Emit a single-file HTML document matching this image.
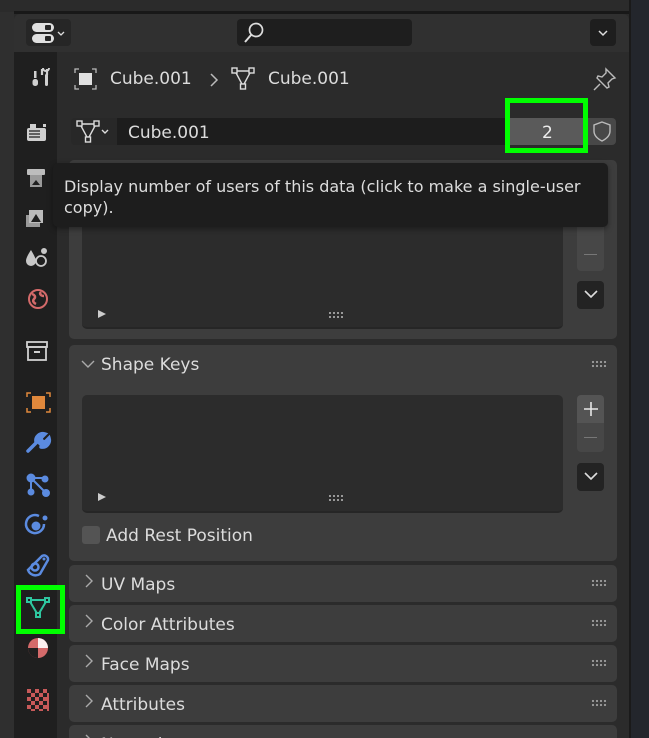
<!DOCTYPE html>
<html style="width:649px;height:738px;overflow:hidden"><head><meta charset="utf-8"><style>
*{margin:0;padding:0;box-sizing:border-box}
body{width:649px;height:738px;overflow:hidden;background:#2a2a2a;font-family:"DejaVu Sans","Liberation Sans",sans-serif;color:#dcdcdc;position:relative}
.a{position:absolute}
.t{position:absolute;font-size:16px;white-space:nowrap;line-height:20px}
.panel{position:absolute;left:69px;width:548px;background:#3d3d3d;border-radius:5px}
.grip{position:absolute;right:10px;width:16px;height:8px;background-image:radial-gradient(circle,#9a9a9a 1px,transparent 1.3px);background-size:4px 4px}
.btn{position:absolute;background:#545454;border-radius:4px}
.dk{position:absolute;background:#1e1e1e;border-radius:4px}
</style></head><body>
<div class="a" style="left:0;top:0;width:14px;height:738px;background:#2f2f2f"></div>
<div class="a" style="left:0;top:0;width:649px;height:12px;background:#2b2b2b"></div>
<div class="a" style="left:14px;top:11px;width:617px;height:3px;background:#181818"></div>
<div class="a" style="left:631px;top:0;width:18px;height:738px;background:#23262c"></div>
<div class="a" style="left:629px;top:0;width:2px;height:738px;background:#1a1a1a"></div>
<div class="a" style="left:14px;top:14px;width:615px;height:38px;background:#303030;border-radius:6px 6px 0 0"></div>
<div class="dk" style="left:26px;top:19px;width:45px;height:27px;background:#262626"></div>
<svg class="a" style="left:30px;top:21px" width="40" height="24"><rect x="2" y="2" width="22" height="9" rx="4.5" fill="#e0e0e0"/><rect x="15" y="4" width="6" height="5" rx="1" fill="#262626"/><rect x="2" y="13" width="22" height="9" rx="4.5" fill="#e0e0e0"/><rect x="15" y="15" width="6" height="5" rx="1" fill="#262626"/><path d="M28 11l3 3 3-3" stroke="#ddd" stroke-width="1.3" fill="none"/></svg>
<div class="dk" style="left:237px;top:19px;width:175px;height:27px;background:#1e1e1e"></div>
<svg class="a" style="left:242px;top:20px" width="26" height="26"><circle cx="14" cy="10" r="6.5" stroke="#ddd" stroke-width="1.7" fill="none"/><path d="M9.5 14.5L3 22" stroke="#ddd" stroke-width="2"/></svg>
<div class="dk" style="left:590px;top:19px;width:26px;height:27px;background:#1e1e1e"></div>
<svg class="a" style="left:597px;top:28px" width="12" height="10"><path d="M2 3l4 4 4-4" stroke="#ddd" stroke-width="1.5" fill="none"/></svg>
<div class="a" style="left:14px;top:52px;width:43px;height:686px;background:#1f1f1f"></div>
<div class="a" style="left:57px;top:52px;width:572px;height:686px;background:#2b2b2b"></div>
<svg class="a" style="left:14px;top:52px" width="43" height="686">
<g fill="#d0d0d0">
<path d="M28 17v6M33 17v6" stroke="#d0d0d0" stroke-width="2.2"/><rect x="31" y="22" width="3" height="12" rx="1.5"/><path d="M29 16a3 3 0 0 0 6 0" stroke="#d0d0d0" stroke-width="2" fill="none"/>
<rect x="20" y="19" width="2.5" height="7"/><rect x="18.5" y="27" width="5.5" height="7" rx="2.5"/>
<rect x="13" y="76" width="19" height="13" rx="2" fill="#cfcfcf"/><rect x="16" y="72" width="6" height="4"/><rect x="29" y="72" width="3" height="3"/><path d="M15 79h11M15 82h11M15 85h11" stroke="#1f1f1f" stroke-width="1.3"/>
<rect x="13" y="117" width="18" height="6" rx="1" fill="#bdbdbd"/><rect x="16" y="123" width="12" height="12" fill="#9a9a9a"/><path d="M18 133l4-5 4 5z" fill="#1f1f1f"/>
<rect x="12" y="163" width="14" height="12" fill="#999"/><rect x="15" y="158" width="14" height="13" fill="#bbb"/><path d="M17 170l5-8 5 8z" fill="#1f1f1f"/>
<path d="M17 198c-4 6-5 9-5 11a5 5 0 0 0 10 0c0-2-2-6-5-11z" fill="#c8c8c8"/><circle cx="30" cy="199" r="3" fill="#c8c8c8"/><circle cx="27" cy="209" r="5" stroke="#c8c8c8" stroke-width="1.8" fill="#1f1f1f"/>
<circle cx="24" cy="247" r="9" stroke="#d46a6a" stroke-width="2" fill="none"/><path d="M18 242c3 1 4 3 2 5s0 4 2 5M27 240c-2 2 0 4 3 4" stroke="#d46a6a" stroke-width="2.5" fill="none"/>
<rect x="13" y="290" width="20" height="5" fill="none" stroke="#d0d0d0" stroke-width="1.8"/><rect x="14" y="295" width="18" height="13" fill="none" stroke="#d0d0d0" stroke-width="1.8"/><rect x="20" y="299" width="6" height="2"/>
</g>
<rect x="18" y="344" width="13" height="13" fill="#e0883c"/><path d="M13 345v-4h4M32 341h4v4M13 356v4h4M32 360h4v-4" stroke="#e0883c" stroke-width="1.5" fill="none"/>
<path d="M14 399l9-9M22 390a7 7 0 0 1 9-8l-4 4 1 3 3 1 4-4a7 7 0 0 1-8 9" stroke="#5b8be0" stroke-width="3.5" fill="#5b8be0" stroke-linecap="round"/>
<g fill="#5b8be0" stroke="#5b8be0" stroke-width="2"><circle cx="17" cy="426" r="3.5"/><circle cx="31" cy="427" r="2.5"/><circle cx="17" cy="440" r="2.5"/><circle cx="32" cy="441" r="3"/><path d="M17 426v14M17 426h14M17 426l15 15"/></g>
<circle cx="22" cy="474" r="4.5" fill="#5b8be0"/><circle cx="31" cy="466" r="2.5" fill="#5b8be0"/><path d="M30 472a9 9 0 1 1-5-8" stroke="#5b8be0" stroke-width="2.5" fill="none"/>
<g stroke="#5b8be0" stroke-width="2.5" fill="none"><path d="M14 518a8 8 0 0 0 12 4l8-14a4 4 0 0 0-6-4z"/><circle cx="21" cy="515" r="3.5"/></g><circle cx="30" cy="507" r="1.5" fill="#5b8be0"/>
<g stroke="#2ec7a0" stroke-width="2" fill="none"><path d="M15 548h18l-9 15z"/><rect x="13" y="546" width="4" height="4" fill="#1f1f1f"/><rect x="31" y="546" width="4" height="4" fill="#1f1f1f"/><rect x="22" y="561" width="4" height="4" fill="#1f1f1f"/></g>
<circle cx="24" cy="596" r="10" fill="#d46a6a"/><path d="M24 586v10h10a10 10 0 0 0-10-10z" fill="#fff" opacity=".9"/><path d="M14 596h10v10a10 10 0 0 1-10-10z" fill="#1f1f1f"/>
<rect x="13" y="637" width="22" height="22" fill="#c85a5a"/><g fill="#1f1f1f"><rect x="17" y="637" width="4" height="4"/><rect x="25" y="637" width="4" height="4"/><rect x="33" y="637" width="2" height="4"/><rect x="13" y="641" width="4" height="4"/><rect x="21" y="641" width="4" height="4"/><rect x="29" y="641" width="4" height="4"/><rect x="17" y="645" width="4" height="4"/><rect x="25" y="645" width="4" height="4"/><rect x="13" y="649" width="4" height="4"/><rect x="21" y="649" width="4" height="4"/><rect x="29" y="649" width="4" height="4"/><rect x="17" y="653" width="4" height="4"/><rect x="25" y="653" width="4" height="4"/><rect x="13" y="657" width="4" height="2"/><rect x="21" y="657" width="4" height="2"/><rect x="29" y="657" width="4" height="2"/></g>
</svg>
<div class="a" style="left:16px;top:585px;width:49px;height:49px;border:5px solid #00ff00"></div>
<svg class="a" style="left:73px;top:67px" width="26" height="24"><rect x="6" y="6" width="13" height="12" fill="#e0e0e0"/><path d="M2 6V2h4M19 2h4v4M2 18v4h4M23 18v4h-4" stroke="#bbb" stroke-width="1.3" fill="none"/></svg>
<div class="t" style="left:110px;top:69px;font-size:17px">Cube.001</div>
<svg class="a" style="left:207px;top:71px" width="14" height="18"><path d="M4 3l6 6-6 6" stroke="#bbb" stroke-width="1.5" fill="none"/></svg>
<svg class="a" style="left:230px;top:66px" width="28" height="26"><g stroke="#ddd" stroke-width="1.4" fill="none"><path d="M5 5h16l-8 15z"/><rect x="2" y="2" width="5" height="5" fill="#2b2b2b"/><rect x="19" y="2" width="5" height="5" fill="#2b2b2b"/><rect x="10.5" y="18" width="5" height="5" fill="#2b2b2b"/></g></svg>
<div class="t" style="left:268px;top:69px;font-size:17px">Cube.001</div>
<svg class="a" style="left:592px;top:66px" width="26" height="26"><g stroke="#bbb" stroke-width="1.4" fill="none"><path d="M14 3l9 9-3 1-4 4 1 4-2 1-10-10 1-2 4 1 4-4z"/><path d="M8 18l-6 6"/></g></svg>
<div class="a" style="left:71px;top:118px;width:46px;height:27px;background:#282828;border-radius:4px 0 0 4px"></div>
<svg class="a" style="left:75px;top:119px" width="40" height="26"><g stroke="#ddd" stroke-width="1.4" fill="none"><path d="M5 5h16l-8 15z"/><rect x="2" y="2" width="5" height="5" fill="#282828"/><rect x="19" y="2" width="5" height="5" fill="#282828"/><rect x="10.5" y="18" width="5" height="5" fill="#282828"/><path d="M27 11l3 3 3-3"/></g></svg>
<div class="a" style="left:117px;top:118px;width:390px;height:27px;background:#1d1d1d"></div>
<div class="t" style="left:128px;top:123px;font-size:17px">Cube.001</div>
<div class="a" style="left:506px;top:118px;width:78px;height:27px;background:#5a5a5a"></div>
<div class="t" style="left:542px;top:123px;font-size:17px;color:#eee">2</div>
<div class="a" style="left:587px;top:118px;width:29px;height:27px;background:#484848;border-radius:0 4px 4px 0"></div>
<svg class="a" style="left:591px;top:120px" width="22" height="24"><path d="M11 2l8 3v6c0 5-4 8-8 10-4-2-8-5-8-10V5z" stroke="#bbb" stroke-width="1.4" fill="none"/></svg>
<div class="a" style="left:505px;top:98px;width:83px;height:55px;border:5px solid #00ff00"></div>
<div class="panel" style="top:160px;height:179px"></div>
<div class="a" style="left:82px;top:170px;width:481px;height:159px;background:#2c2c2c;border-radius:5px;border-bottom:2px solid #262626"></div>
<svg class="a" style="left:96px;top:308px" width="12" height="12"><path d="M2 2l8 4-8 4z" fill="#ccc"/></svg>
<div class="a" style="left:328px;top:311px;width:16px;height:8px;background-image:radial-gradient(circle,#aaa 0.9px,transparent 1.2px);background-size:4px 4px"></div>
<div class="btn" style="left:577px;top:216px;width:27px;height:55px;background:#474747"></div>
<div class="a" style="left:584px;top:254px;width:13px;height:1px;background:#777"></div>
<div class="dk" style="left:577px;top:281px;width:27px;height:28px;background:#232323"></div>
<svg class="a" style="left:583px;top:288px" width="16" height="12"><path d="M2 3l6 6 6-6" stroke="#ddd" stroke-width="1.6" fill="none"/></svg>
<div class="a" style="left:53px;top:163px;width:555px;height:64px;background:#1d1d1d;border-radius:5px;box-shadow:0 2px 6px rgba(0,0,0,.4)"></div>
<div class="t" style="left:64px;top:177px;font-size:16px;color:#ddd">Display number of users of this data (click to make a single-user</div>
<div class="t" style="left:64px;top:198px;font-size:16px;color:#ddd">copy).</div>
<div class="panel" style="top:345px;height:216px"></div>
<svg class="a" style="left:80px;top:358px" width="16" height="12"><path d="M2 3l6 6 6-6" stroke="#aaa" stroke-width="1.4" fill="none"/></svg>
<div class="t" style="left:101px;top:355px;font-size:17px">Shape Keys</div>
<div class="grip" style="top:360px;right:42px"></div>
<div class="a" style="left:82px;top:395px;width:481px;height:118px;background:#2c2c2c;border-radius:5px;border-bottom:2px solid #262626"></div>
<svg class="a" style="left:96px;top:491px" width="12" height="12"><path d="M2 2l8 4-8 4z" fill="#ccc"/></svg>
<div class="a" style="left:328px;top:494px;width:16px;height:8px;background-image:radial-gradient(circle,#aaa 0.9px,transparent 1.2px);background-size:4px 4px"></div>
<div class="btn" style="left:577px;top:395px;width:27px;height:28px;background:#545454;border-radius:4px 4px 0 0"></div>
<div class="btn" style="left:577px;top:423px;width:27px;height:29px;background:#474747;border-radius:0 0 4px 4px"></div>
<svg class="a" style="left:582px;top:400px" width="18" height="18"><path d="M9 2v14M2 9h14" stroke="#e6e6e6" stroke-width="1.6"/></svg>
<div class="a" style="left:584px;top:437px;width:13px;height:1px;background:#777"></div>
<div class="dk" style="left:577px;top:463px;width:27px;height:28px;background:#232323"></div>
<svg class="a" style="left:583px;top:470px" width="16" height="12"><path d="M2 3l6 6 6-6" stroke="#ddd" stroke-width="1.6" fill="none"/></svg>
<div class="a" style="left:82px;top:526px;width:18px;height:18px;background:#545454;border-radius:3px"></div>
<div class="t" style="left:106px;top:526px;font-size:17px">Add Rest Position</div>
<div class="panel" style="top:565px;height:37px"></div>
<div class="panel" style="top:605px;height:37px"></div>
<div class="panel" style="top:645px;height:37px"></div>
<div class="panel" style="top:685px;height:37px"></div>
<div class="panel" style="top:725px;height:13px;border-radius:5px 5px 0 0"></div>
<svg class="a" style="left:82px;top:570px" width="14" height="168"><g stroke="#aaa" stroke-width="1.4" fill="none"><path d="M4 5l6 6-6 6M4 45l6 6-6 6M4 85l6 6-6 6M4 125l6 6-6 6M4 165l6 6"/></g></svg>
<div class="t" style="left:101px;top:575px;font-size:17px">UV Maps</div>
<div class="t" style="left:101px;top:615px;font-size:17px">Color Attributes</div>
<div class="t" style="left:101px;top:655px;font-size:17px">Face Maps</div>
<div class="t" style="left:101px;top:695px;font-size:17px">Attributes</div>
<div class="t" style="left:101px;top:735px;font-size:17px">Normals</div>
<div class="grip" style="top:579px;right:42px"></div>
<div class="grip" style="top:619px;right:42px"></div>
<div class="grip" style="top:659px;right:42px"></div>
<div class="grip" style="top:699px;right:42px"></div>
</body></html>
